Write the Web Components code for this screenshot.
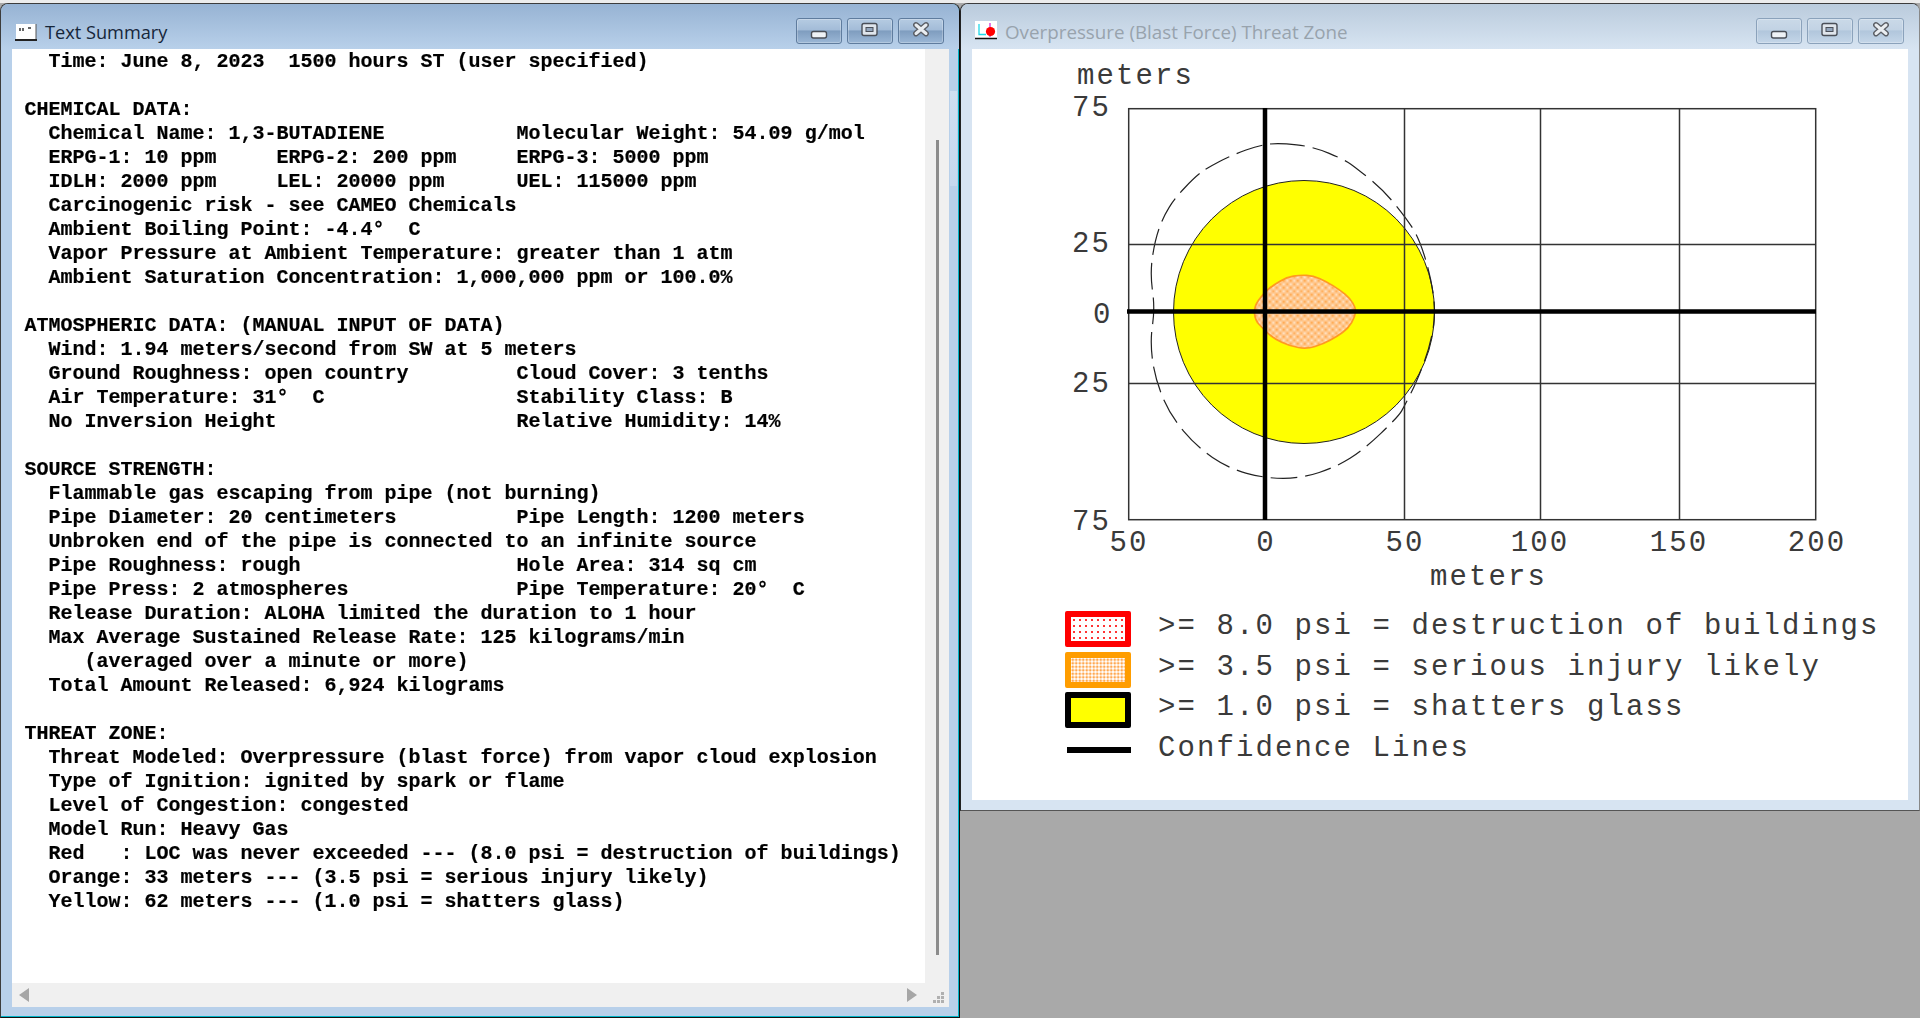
<!DOCTYPE html>
<html><head><meta charset="utf-8"><title>ALOHA</title>
<style>
html,body{margin:0;padding:0;height:100%;background:#a9a9a9;overflow:hidden}
</style></head><body>
<template id="win-t"><style>
:host{display:flex;flex-direction:column;box-sizing:border-box;border:1px solid #3c3c3c;border-radius:8px 8px 0 0;background:var(--frame);font-family:"Open Sans","Noto Sans",sans-serif;overflow:hidden}
.bar{display:flex;align-items:flex-start;height:45px;box-sizing:border-box;padding:14px var(--pr,15px) 0 14px;background:linear-gradient(var(--bar-top),var(--frame));flex:none}
.ttl{flex:1;margin-left:8px;font-size:var(--ts,18px);line-height:28px;color:var(--ttl);white-space:nowrap}
.btns{display:flex;gap:5px}
.client{flex:1;min-height:0;margin:0 var(--mr,10px) var(--mb,10px) 11px;background:#fff;display:flex;flex-direction:column}
</style>
<div class="bar"><slot name="icon"></slot><div class="ttl"><slot name="title"></slot></div><div class="btns"><cap-btn kind="min"></cap-btn><cap-btn kind="max"></cap-btn><cap-btn kind="close"></cap-btn></div></div>
<div class="client"><slot></slot></div>
</template>
<template id="btn-t"><style>
:host{display:block;width:46px;height:26px;box-sizing:border-box;border:1px solid var(--btn-b);border-radius:3px;background:var(--btn-bg);box-shadow:inset 0 0 0 1px rgba(255,255,255,.25)}
svg{display:block;width:100%;height:100%}
</style><svg viewBox="0 0 44 24"></svg></template>
<template id="rep-t"><style>
:host{display:flex;flex-direction:column;flex:1;min-height:0}
.main{flex:1;min-height:0;display:flex}
pre{flex:1;margin:0;padding:1px 0 0 12.5px;font:700 20px/24px "Liberation Mono",monospace;color:#000;overflow:hidden;white-space:pre;-webkit-text-stroke:.2px #000;filter:blur(.35px)}
.v{width:24px;flex:none;background:#f0f0f0;box-sizing:border-box;padding:91px 0 28px 11px}
.v i{display:block;width:3px;height:100%;background:#8c8c8c}
.h{height:24px;flex:none;background:#f0f0f0;display:flex;align-items:center;padding:0 4px 0 7px}
.h svg{display:block;flex:none}
.sp{flex:1}
</style>
<div class="main"><pre></pre><div class="v"><i></i></div></div>
<div class="h"><svg width="10" height="14" viewBox="0 0 10 14"><path d="M10 0V14L0 7Z" fill="#a6a6a6"/></svg><div class="sp"></div><svg width="10" height="14" viewBox="0 0 10 14"><path d="M0 0V14L10 7Z" fill="#a6a6a6"/></svg><svg style="margin-left:16px;margin-top:6px" width="12" height="12" viewBox="0 0 12 12" fill="#b0b0b0"><rect x="8" y="0" width="3" height="3"/><rect x="4" y="4" width="3" height="3"/><rect x="8" y="4" width="3" height="3"/><rect x="0" y="8" width="3" height="3"/><rect x="4" y="8" width="3" height="3"/><rect x="8" y="8" width="3" height="3"/></svg></div>
</template>
<template id="plot-t"><style>
:host{display:block;height:560px;flex:none}
svg{display:block}
text{font:29px "Liberation Mono",monospace;fill:#3a3a3a;letter-spacing:2.1px}
</style>
<svg width="936" height="560" viewBox="972 49 936 560">
<defs><pattern id="dots" width="3.500" height="3.500" patternUnits="userSpaceOnUse"><rect width="3.500" height="3.500" fill="#ffe9d0"/><circle cx=".9" cy=".9" r="1" fill="#ff9d3a"/><circle cx="2.650" cy="2.650" r="1" fill="#ff9d3a"/></pattern></defs>
<ellipse cx="1304" cy="312" rx="130.500" ry="131.500" fill="#ff0" stroke="#222" stroke-width="1"/>
<g transform="translate(1100 160) scale(.33333)">
<path class="sm" data-p="462,440 490,400 520,375 560,352 600,345 640,347 680,365 720,390 750,415 768,445 765,470 745,505 710,530 670,552 620,567 570,558 520,535 490,507 465,480" fill="url(#dots)" stroke="#ff9a20" stroke-width="5"/>
<path class="sm" data-p="540,-51 480,-45 396,-15 321,24 285,51 225,114 190,170 165,240 150,340 165,445 150,545 165,655 210,765 290,860 385,925 495,955 605,955 710,920 790,870 895,770 915,735 950,665 990,560 1008,455 990,340 955,230 915,170 850,90 770,25 735,0 640,-40" fill="none" stroke="#222" stroke-width="3.600" stroke-dasharray="80 24"/>
</g>
<g stroke="#333" stroke-width="1.500" fill="none">
<rect x="1128.700" y="108.700" width="687" height="411"/>
<path d="M1404.500 108V520M1540.500 108V520M1679.500 108V520M1128 244.500H1816M1128 383.500H1816"/>
</g>
<path d="M1265 108V520M1127 311.500H1816" stroke="#000" stroke-width="4.500" fill="none"/>
<text x="1077" y="84">meters</text>
<text x="1072" y="116">75</text><text x="1072" y="252">25</text><text x="1093" y="323">0</text><text x="1072" y="392">25</text><text x="1072" y="530">75</text>
<g text-anchor="middle"><text x="1129" y="551">50</text><text x="1266" y="551">0</text><text x="1405" y="551">50</text><text x="1540" y="551">100</text><text x="1679" y="551">150</text><text x="1817" y="551">200</text></g>
<text x="1430" y="585">meters</text>
</svg></template>
<template id="leg-t"><style>
:host{display:grid;grid-auto-rows:40.6px;padding:2px 0 0 93px;font:29px/31px "Liberation Mono",monospace;color:#3a3a3a;letter-spacing:2.1px}
.r{display:flex;align-items:flex-start;white-space:pre}
.s{width:66px;height:36px;box-sizing:border-box;border:6px solid;border-radius:2px;margin-right:27px;flex:none}
.red{border-color:#f00;background:#fff radial-gradient(circle,#f33 0 1px,transparent 1.2px) 0 0/6px 6px}
.org{border-color:#ff9d00;background:#fff radial-gradient(circle,#ffa850 0 1.2px,transparent 1.5px) 0 0/3.5px 3.5px}
.yel{border-color:#000;background:#ff0}
.ln{border:0;height:36px;background:linear-gradient(#000,#000) right 14px/97% 6px no-repeat}
</style>
<div class="r"><div class="s red"></div>&gt;= 8.0 psi = destruction of buildings</div>
<div class="r"><div class="s org"></div>&gt;= 3.5 psi = serious injury likely</div>
<div class="r"><div class="s yel"></div>&gt;= 1.0 psi = shatters glass</div>
<div class="r"><div class="s ln"></div>Confidence Lines</div>
</template>

<app-desk></app-desk>
<script>
const tpl=id=>document.getElementById(id).content.cloneNode(true);
class Base extends HTMLElement{constructor(id){super();this.attachShadow({mode:'open'}).appendChild(tpl(id));}}
class AppWindow extends Base{constructor(){super('win-t');}}
class CapBtn extends Base{constructor(){super('btn-t');}
 connectedCallback(){const k=this.getAttribute('kind');const g={
  min:'<rect x="14.500" y="12.500" width="15" height="6.500" rx="2" fill="#eef2f6" stroke="#4a4f58" stroke-width="1.400"/>',
  max:'<rect x="14" y="4.500" width="15" height="12" rx="2" fill="#dfe5ec" stroke="#4a4f58" stroke-width="1.400"/><rect x="18" y="8.500" width="7" height="4" fill="#93a6bd" stroke="#4a4f58"/>',
  close:'<path d="M17 6L27 14.500M27 6L17 14.500" stroke="#5b5f66" stroke-width="5.800" stroke-linecap="round"/><path d="M17 6L27 14.500M27 6L17 14.500" stroke="#e9edf1" stroke-width="3" stroke-linecap="round"/>'}[k];
  this.shadowRoot.querySelector('svg').innerHTML=g;}}
class ReportText extends Base{constructor(){super('rep-t');
 const c=(a,b)=>a.padEnd(41)+b;
 this.shadowRoot.querySelector('pre').textContent=[
"  Time: June 8, 2023  1500 hours ST (user specified)","",
"CHEMICAL DATA:",
c("  Chemical Name: 1,3-BUTADIENE","Molecular Weight: 54.09 g/mol"),
"  ERPG-1: 10 ppm     ERPG-2: 200 ppm     ERPG-3: 5000 ppm",
"  IDLH: 2000 ppm     LEL: 20000 ppm      UEL: 115000 ppm",
"  Carcinogenic risk - see CAMEO Chemicals",
"  Ambient Boiling Point: -4.4°  C",
"  Vapor Pressure at Ambient Temperature: greater than 1 atm",
"  Ambient Saturation Concentration: 1,000,000 ppm or 100.0%","",
"ATMOSPHERIC DATA: (MANUAL INPUT OF DATA)",
"  Wind: 1.94 meters/second from SW at 5 meters",
c("  Ground Roughness: open country","Cloud Cover: 3 tenths"),
c("  Air Temperature: 31°  C","Stability Class: B"),
c("  No Inversion Height","Relative Humidity: 14%"),"",
"SOURCE STRENGTH:",
"  Flammable gas escaping from pipe (not burning)",
c("  Pipe Diameter: 20 centimeters","Pipe Length: 1200 meters"),
"  Unbroken end of the pipe is connected to an infinite source",
c("  Pipe Roughness: rough","Hole Area: 314 sq cm"),
c("  Pipe Press: 2 atmospheres","Pipe Temperature: 20°  C"),
"  Release Duration: ALOHA limited the duration to 1 hour",
"  Max Average Sustained Release Rate: 125 kilograms/min",
"     (averaged over a minute or more)",
"  Total Amount Released: 6,924 kilograms","",
"THREAT ZONE:",
"  Threat Modeled: Overpressure (blast force) from vapor cloud explosion",
"  Type of Ignition: ignited by spark or flame",
"  Level of Congestion: congested",
"  Model Run: Heavy Gas",
"  Red   : LOC was never exceeded --- (8.0 psi = destruction of buildings)",
"  Orange: 33 meters --- (3.5 psi = serious injury likely)",
"  Yellow: 62 meters --- (1.0 psi = shatters glass)"].join("\n");
}}
class ThreatPlot extends Base{constructor(){super('plot-t');
 this.shadowRoot.querySelectorAll('.sm').forEach(p=>{
  const q=p.dataset.p.split(' ').map(s=>s.split(',').map(Number));const n=q.length;
  const mid=(a,b)=>[(a[0]+b[0])/2,(a[1]+b[1])/2];
  let m=mid(q[n-1],q[0]);let d='M'+m.join(' ');
  for(let i=0;i<n;i++){const e=mid(q[i],q[(i+1)%n]);d+='Q'+q[i].join(' ')+' '+e.join(' ');}
  p.setAttribute('d',d+'Z');});
}}
class ThreatLegend extends Base{constructor(){super('leg-t');}}
class AppDesk extends HTMLElement{constructor(){super();this.attachShadow({mode:'open'}).innerHTML=`<style>
:host{display:flex;flex-direction:column;width:1920px;height:1018px;background:#a9a9a9;overflow:hidden}
.strip{height:3px;background:#ececec;flex:none}
.row{display:flex;align-items:flex-start;flex:1;min-height:0}
.a{width:960px;height:1015px;border-right-color:#111;border-bottom-color:#111;--frame:#b8d0ea;--bar-top:#97b3d3;--ttl:#16263a;--ts:18.2px;--btn-b:#5f7c9e;--btn-bg:linear-gradient(#b5cbe2 0,#a3bcd8 45%,#7f9dbf 50%,#9bb7d6 100%);--mr:10px;--mb:10px;--pr:15px;box-shadow:inset -1px 0 #00b4c8,inset 0 -1px #00b4c8;background-image:linear-gradient(#cfdff1,#c5d8ee);background-repeat:no-repeat;background-position:right 2px top 87px;background-size:7px 95px}
.b{width:960px;height:808px;border-left-color:#222;border-right-color:#888;border-bottom-color:#555;--frame:#d7e4f2;--bar-top:#bacbdc;--ttl:#98a3ad;--ts:18.8px;--btn-b:#8ba2bb;--btn-bg:linear-gradient(#cad9e8 0,#c2d3e4 45%,#b1c6dc 50%,#c4d6e8 100%);--mr:11px;--mb:10px;--pr:15px}
svg{display:block}
</style><div class="strip"></div><div class="row">
<app-window class="a">
<svg slot="icon" width="22" height="22" viewBox="0 0 22 22" style="flex:none;margin-top:4px"><rect x="1" y="2" width="20" height="15" fill="#fff"/><path d="M0 18H22" stroke="#222" stroke-width="2"/><path d="M21 2V17" stroke="#555"/><path d="M5 6V9M8 6V9M13 6H16" stroke="#333" stroke-width="1.500"/></svg>
<span slot="title">Text Summary</span>
<report-text></report-text>
</app-window>
<app-window class="b">
<svg slot="icon" width="22" height="22" viewBox="0 0 22 22" style="flex:none;margin-top:3px"><rect x="0" y="0" width="22" height="17" fill="#fff"/><path d="M0 17.500H22" stroke="#111" stroke-width="1.500"/><path d="M4 3V13.500H11" stroke="#20d8e8" stroke-width="1.300" fill="none"/><path d="M15 2V16" stroke="#d020d0" stroke-width="1.200"/><circle cx="15.500" cy="10.500" r="4.600" fill="#f00"/></svg>
<span slot="title">Overpressure (Blast Force) Threat Zone</span>
<threat-plot></threat-plot><threat-legend></threat-legend>
</app-window>
</div>`;}}
customElements.define('cap-btn',CapBtn);
customElements.define('app-window',AppWindow);
customElements.define('report-text',ReportText);
customElements.define('threat-plot',ThreatPlot);
customElements.define('threat-legend',ThreatLegend);
customElements.define('app-desk',AppDesk);
</script>
</body></html>
